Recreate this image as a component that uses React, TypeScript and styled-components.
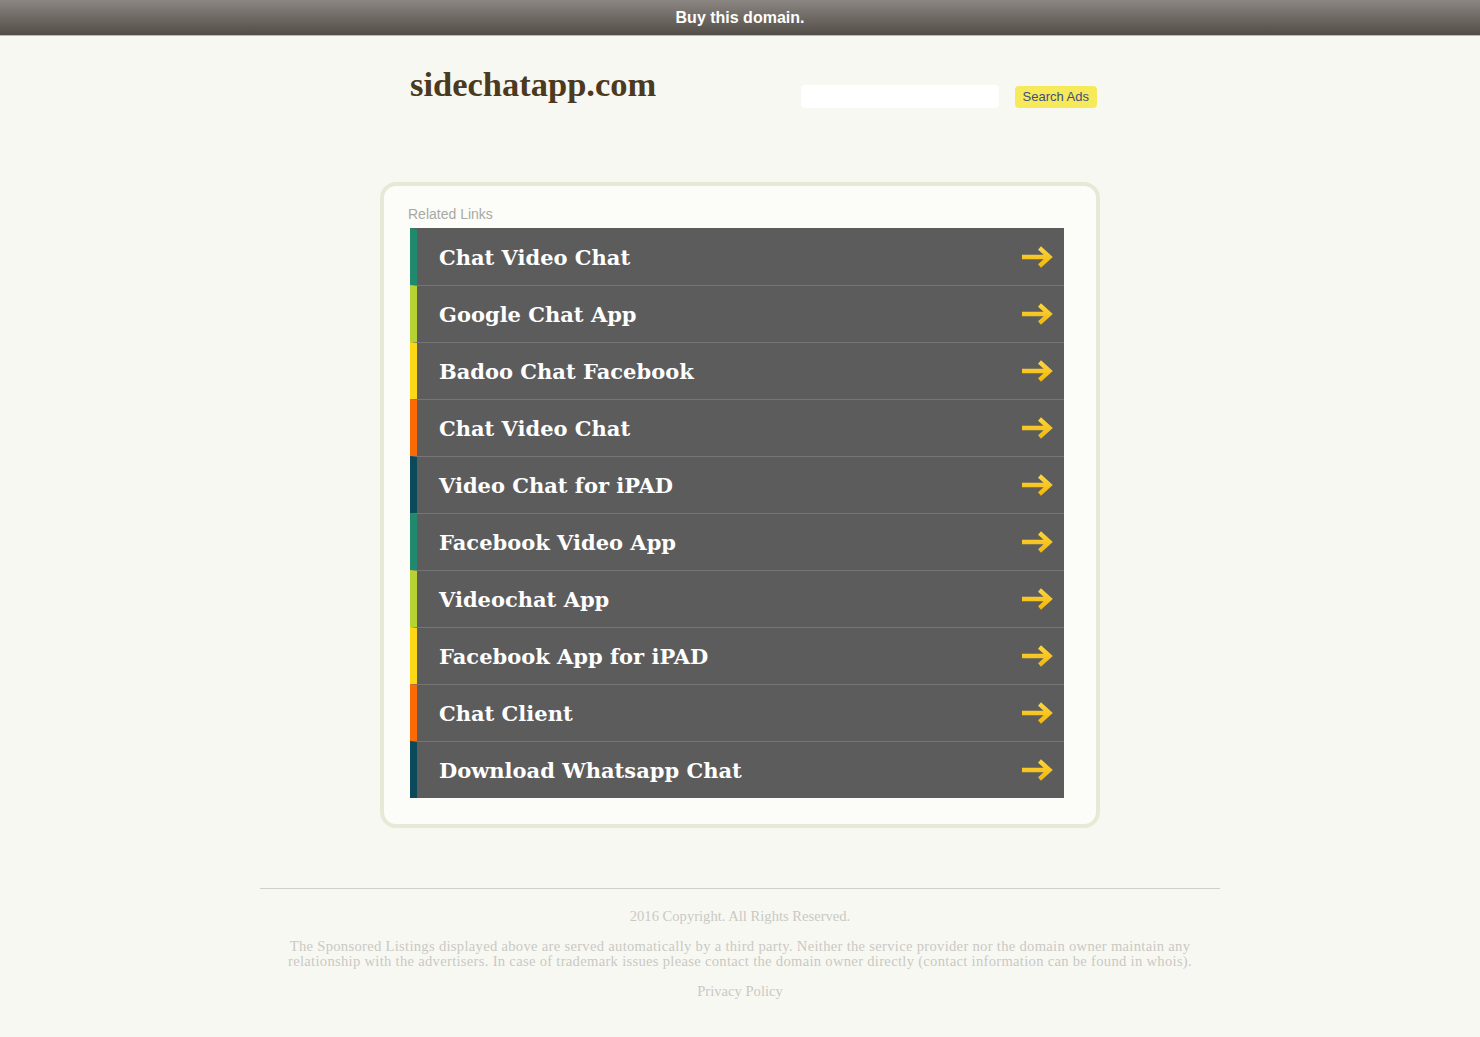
import React from "react";
import styled, { createGlobalStyle } from "styled-components";

const links = [
  "Chat Video Chat",
  "Google Chat App",
  "Badoo Chat Facebook",
  "Chat Video Chat",
  "Video Chat for iPAD",
  "Facebook Video App",
  "Videochat App",
  "Facebook App for iPAD",
  "Chat Client",
  "Download Whatsapp Chat",
];

const barColors = ["#1f8a6e", "#b6d334", "#fcd817", "#fb6b05", "#0b4a5b"];

const Arrow: React.FC = () => (
  <svg width="34" height="26" viewBox="0 0 34 26">
    <defs>
      <linearGradient id="arrowFill" x1="0" y1="0" x2="0" y2="1">
        <stop offset="0" stopColor="#fbd43a" />
        <stop offset="1" stopColor="#f2b90f" />
      </linearGradient>
    </defs>
    <path
      d="M2 13 H29 M19.5 4 L29.5 13 L19.5 22"
      fill="none"
      stroke="url(#arrowFill)"
      strokeWidth="4.4"
      strokeLinejoin="miter"
    />
  </svg>
);

const App: React.FC = () => {
  return (
    <>
      <GlobalStyle />
      <TopBar>Buy this domain.</TopBar>
      <Header>
        <Title>sidechatapp.com</Title>
        <SearchForm>
          <SearchInput type="text" />
          <SearchButton type="button">Search Ads</SearchButton>
        </SearchForm>
      </Header>
      <Card>
        <CardLabel>Related Links</CardLabel>
        <LinkList>
          {links.map((label, i) => (
            <LinkRow key={i} $bar={barColors[i % barColors.length]} $first={i === 0}>
              <LinkText>{label}</LinkText>
              <Arrow />
            </LinkRow>
          ))}
        </LinkList>
      </Card>
      <Footer>
        <FootLine>2016 Copyright. All Rights Reserved.</FootLine>
        <FootLine $wide>
          The Sponsored Listings displayed above are served automatically by a third party. Neither the service
          provider nor the domain owner maintain any relationship with the advertisers. In case of trademark issues
          please contact the domain owner directly (contact information can be found in whois).
        </FootLine>
        <FootLink href="#">Privacy Policy</FootLink>
      </Footer>
    </>
  );
};

const GlobalStyle = createGlobalStyle`
  body {
    margin: 0;
    background: #f8f8f3;
    font-family: "Liberation Sans", Arial, sans-serif;
  }
`;

const TopBar = styled.div`
  height: 35px;
  border-bottom: 1px solid #bdb8b0;
  background: linear-gradient(#8b8681, #524d47);
  color: #ffffff;
  font-weight: bold;
  font-size: 16px;
  line-height: 35px;
  text-align: center;
`;

const Header = styled.div`
  width: 720px;
  margin: 0 auto;
  display: flex;
  justify-content: space-between;
  align-items: flex-start;
  padding-top: 28px;
  height: 146px;
  box-sizing: border-box;
`;

const Title = styled.h1`
  margin: 0 0 0 30px;
  font-family: "Liberation Serif", "Times New Roman", serif;
  font-size: 34.5px;
  font-weight: bold;
  color: #4b3a1e;
  line-height: 40px;
`;

const SearchForm = styled.div`
  display: flex;
  align-items: center;
  gap: 16px;
  margin-top: 21px;
  margin-right: 3px;
`;

const SearchInput = styled.input`
  width: 198px;
  height: 23px;
  box-sizing: border-box;
  border: none;
  border-radius: 4px;
  background: #ffffff;
`;

const SearchButton = styled.button`
  height: 22px;
  padding: 0 8px;
  border: none;
  border-radius: 4px;
  background: #f6e95a;
  color: #3d4e80;
  font-family: "Liberation Sans", Arial, sans-serif;
  font-size: 13px;
`;

const Card = styled.div`
  width: 720px;
  box-sizing: border-box;
  margin: 0 auto;
  padding: 20px 32px 26px 26px;
  border: 4px solid #e6e9d6;
  border-radius: 16px;
  background: #fcfdf8;
`;

const CardLabel = styled.div`
  margin: 0 0 6px -2px;
  font-size: 14px;
  line-height: 16px;
  color: #a9a9a4;
`;

const LinkList = styled.div`
  display: flex;
  flex-direction: column;
`;

const LinkRow = styled.a<{ $bar: string; $first: boolean }>`
  display: flex;
  align-items: center;
  justify-content: space-between;
  height: 57px;
  box-sizing: border-box;
  padding: 0 10px 0 22px;
  background: #5c5c5c;
  border-left: 7px solid ${(p) => p.$bar};
  border-top: 1px solid ${(p) => (p.$first ? "#5c5c5c" : "#757575")};
  text-decoration: none;
  cursor: pointer;
`;

const LinkText = styled.span`
  font-family: "DejaVu Serif", "Liberation Serif", serif;
  font-weight: bold;
  font-size: 21px;
  color: #ffffff;
`;

const Footer = styled.div`
  width: 960px;
  margin: 60px auto 0;
  padding-top: 20px;
  border-top: 1px solid #d0d0cb;
  text-align: center;
  font-family: "Liberation Serif", "Times New Roman", serif;
  font-size: 14.6px;
  line-height: 15px;
  color: #c9c9c3;
`;

const FootLine = styled.p<{ $wide?: boolean }>`
  margin: 0 20px 15px;
  letter-spacing: ${(p) => (p.$wide ? "0.3px" : "0")};
`;

const FootLink = styled.a`
  color: #c9c9c3;
  text-decoration: none;
`;

export default App;
